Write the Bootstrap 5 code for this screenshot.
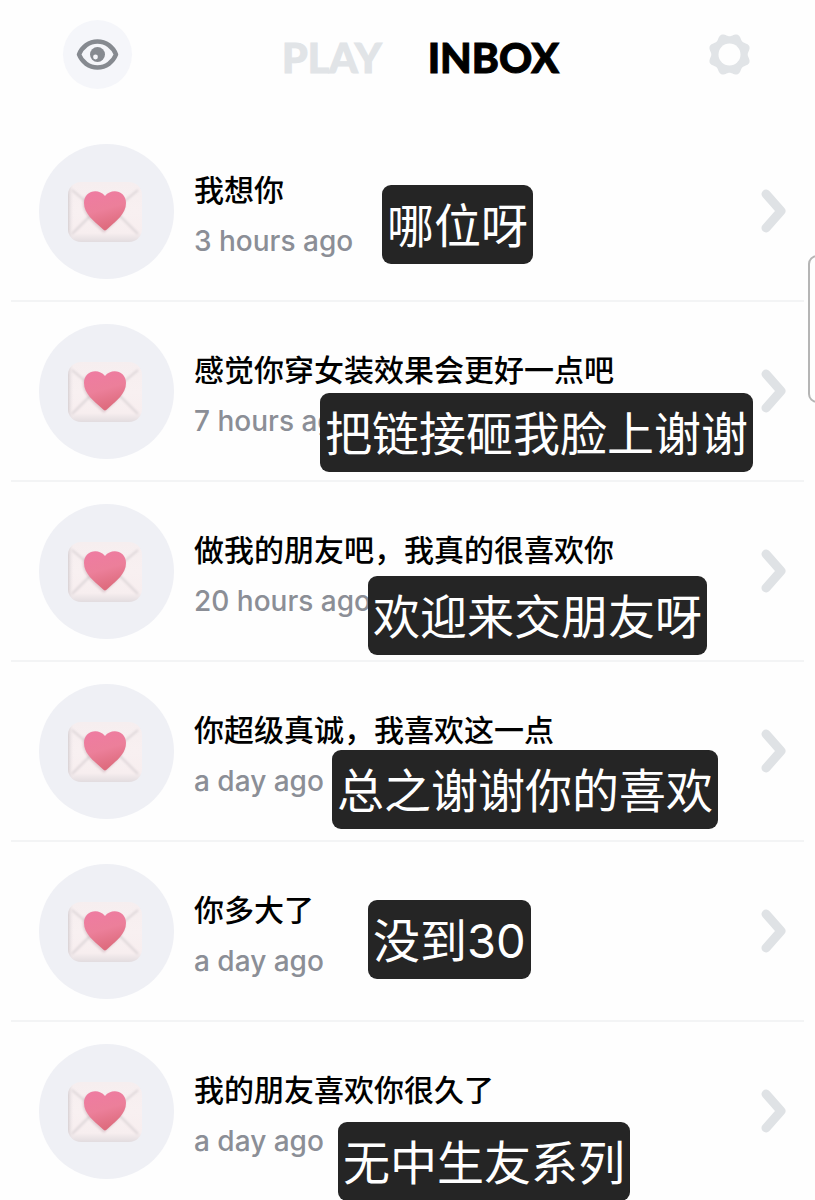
<!DOCTYPE html>
<html lang="zh-CN">
<head>
<meta charset="utf-8">
<meta name="viewport" content="width=device-width, initial-scale=1">
<title>Inbox</title>
<link href="https://cdn.jsdelivr.net/npm/bootstrap@5.3.0/dist/css/bootstrap.min.css" rel="stylesheet">
<style>
  body { background: #fefefe; color: #000; font-family: Inter, "Noto Sans CJK SC", sans-serif; overflow-x: hidden; }
  .topbar { height: 122px; padding: 20px 51px 32px 63px; }
  .icon-btn { width: 69px; height: 69px; border: 0; padding: 0; background: transparent; }
  .icon-btn.filled { background: #f5f6fa; }
  .tabs { gap: 46px; font: 900 41px/48px Lato, sans-serif; padding: 14px 0 0 14px; -webkit-text-stroke: 1px currentColor; }
  .tabs a { color: #e1e4e7; text-decoration: none; }
  .tabs a.active { color: #000; }
  .inbox { margin: 0 11px; }
  .message { height: 180px; gap: 20px; padding: 0 18px 0 28px; border-bottom: 2px solid #f3f4f5; color: #000; text-decoration: none; }
  .avatar { width: 135px; height: 135px; background: #eff0f5; }
  .message-text { padding-top: 8px; }
  .subject { font-family: "Noto Sans CJK SC", sans-serif; font-size: 30px; line-height: 52px; font-weight: 500; }
  .when { font-size: 28px; line-height: 54px; font-weight: 500; color: #8b8e96; }
  /* Reply captions stuck over the messages */
  .reply { position: absolute; z-index: 1; padding: 6px 5px 4px; border-radius: 9px; background: #252525; color: #fff; font-family: Inter, "Noto Sans CJK SC", sans-serif; font-size: 47px; line-height: 69px; white-space: nowrap; }
  .reply-1 { left: 371px; top: 63px; }
  .reply-2 { left: 309px; top: 91px; }
  .reply-3 { left: 357px; top: 94px; }
  .reply-4 { left: 321px; top: 88px; }
  .reply-5 { left: 357px; top: 58px; }
  .reply-6 { left: 327px; top: 100px; }
  .edge-handle { position: absolute; right: -12px; top: 255px; width: 19px; height: 148px; border: 2px solid #b5b5b5; border-radius: 9px; background: #fefefe; }
</style>
</head>
<body>
<svg class="position-absolute" width="0" height="0" aria-hidden="true">
  <defs>
    <linearGradient id="paper" x1="0" y1="0" x2="0" y2="1"><stop offset="0" stop-color="#f6eeef"/><stop offset=".5" stop-color="#f8f0f1"/><stop offset=".85" stop-color="#f7eeef"/><stop offset="1" stop-color="#e2dcdf"/></linearGradient>
    <linearGradient id="edge" x1="0" y1="0" x2="1" y2="0"><stop offset="0" stop-color="#cfc9cc" stop-opacity=".8"/><stop offset=".08" stop-color="#f4ecee" stop-opacity="0"/></linearGradient>
    <linearGradient id="love" x1="0" y1="0" x2=".3" y2="1"><stop offset="0" stop-color="#ef7ba2"/><stop offset=".55" stop-color="#ec7f9a"/><stop offset="1" stop-color="#de6c7e"/></linearGradient>
    <filter id="soft" x="-20%" y="-20%" width="140%" height="140%"><feGaussianBlur stdDeviation="1.2"/></filter>
  </defs>
  <symbol id="letter" viewBox="0 0 135 135">
    <rect x="29" y="38" width="74" height="60" rx="13" fill="url(#paper)"/>
    <rect x="29" y="38" width="74" height="60" rx="13" fill="url(#edge)"/>
    <path d="M33 46 57 66 33 90M99 46 75 66 99 90" fill="none" stroke="#ddd5d8" stroke-width="2" filter="url(#soft)"/>
    <path d="M66 88C58 80 45 71 45 59C45 47 60 44 66 53C73 44 87 47 87 59C87 71 74 80 66 88Z" transform="translate(-1 1)" fill="#c9aab4" opacity=".5" filter="url(#soft)"/>
    <path d="M66 86.500Q65 86.500 62 83.500C55 77 45 70 45 59C45 47 59 43.500 66 52C73 43.500 87 47 87 59C87 70 77 77 70 83.500Q67 86.500 66 86.500Z" fill="url(#love)"/>
  </symbol>
  <symbol id="chevron" viewBox="0 0 25 44"><path d="M5 5 20 22 5 39" fill="none" stroke="#dfe2e5" stroke-width="9" stroke-linecap="round" stroke-linejoin="round"/></symbol>
</svg>

<header class="topbar d-flex justify-content-between align-items-start">
  <button type="button" class="icon-btn filled rounded-circle" aria-label="Views">
    <svg width="69" height="69" viewBox="0 0 69 69"><path d="M16 34.500C19 27 26 21.500 34.500 21.500S50 27 53 34.500C50 42 43 47.500 34.500 47.500S19 42 16 34.500Z" fill="none" stroke="#868a90" stroke-width="4.500" stroke-linejoin="round"/><circle cx="34.500" cy="34.500" r="7.500" fill="#868a90"/><circle cx="32.500" cy="37" r="2.400" fill="#f5f6fa"/></svg>
  </button>
  <nav class="tabs d-flex" aria-label="Main">
    <a href="#play">PLAY</a>
    <a href="#inbox" class="active" aria-current="page">INBOX</a>
  </nav>
  <button type="button" class="icon-btn" aria-label="Settings">
    <svg width="69" height="69" viewBox="-34.500 -34.500 69 69"><g id="gear"></g></svg>
  </button>
</header>

<main class="inbox" id="inbox">
  <a href="#m1" class="message position-relative d-flex align-items-center">
    <svg class="avatar rounded-circle flex-shrink-0" aria-hidden="true"><use href="#letter"/></svg>
    <span class="message-text flex-grow-1"><span class="subject d-block">我想你</span><span class="when d-block">3 hours ago</span></span>
    <svg width="25" height="44" aria-hidden="true"><use href="#chevron"/></svg>
    <span class="reply reply-1">哪位呀</span>
  </a>
  <a href="#m2" class="message position-relative d-flex align-items-center">
    <svg class="avatar rounded-circle flex-shrink-0" aria-hidden="true"><use href="#letter"/></svg>
    <span class="message-text flex-grow-1"><span class="subject d-block">感觉你穿女装效果会更好一点吧</span><span class="when d-block">7 hours ago</span></span>
    <svg width="25" height="44" aria-hidden="true"><use href="#chevron"/></svg>
    <span class="reply reply-2">把链接砸我脸上谢谢</span>
  </a>
  <a href="#m3" class="message position-relative d-flex align-items-center">
    <svg class="avatar rounded-circle flex-shrink-0" aria-hidden="true"><use href="#letter"/></svg>
    <span class="message-text flex-grow-1"><span class="subject d-block">做我的朋友吧，我真的很喜欢你</span><span class="when d-block">20 hours ago</span></span>
    <svg width="25" height="44" aria-hidden="true"><use href="#chevron"/></svg>
    <span class="reply reply-3">欢迎来交朋友呀</span>
  </a>
  <a href="#m4" class="message position-relative d-flex align-items-center">
    <svg class="avatar rounded-circle flex-shrink-0" aria-hidden="true"><use href="#letter"/></svg>
    <span class="message-text flex-grow-1"><span class="subject d-block">你超级真诚，我喜欢这一点</span><span class="when d-block">a day ago</span></span>
    <svg width="25" height="44" aria-hidden="true"><use href="#chevron"/></svg>
    <span class="reply reply-4">总之谢谢你的喜欢</span>
  </a>
  <a href="#m5" class="message position-relative d-flex align-items-center">
    <svg class="avatar rounded-circle flex-shrink-0" aria-hidden="true"><use href="#letter"/></svg>
    <span class="message-text flex-grow-1"><span class="subject d-block">你多大了</span><span class="when d-block">a day ago</span></span>
    <svg width="25" height="44" aria-hidden="true"><use href="#chevron"/></svg>
    <span class="reply reply-5">没到30</span>
  </a>
  <a href="#m6" class="message position-relative d-flex align-items-center">
    <svg class="avatar rounded-circle flex-shrink-0" aria-hidden="true"><use href="#letter"/></svg>
    <span class="message-text flex-grow-1"><span class="subject d-block">我的朋友喜欢你很久了</span><span class="when d-block">a day ago</span></span>
    <svg width="25" height="44" aria-hidden="true"><use href="#chevron"/></svg>
    <span class="reply reply-6">无中生友系列</span>
  </a>
</main>
<div class="edge-handle" aria-hidden="true"></div>

<script src="https://cdn.jsdelivr.net/npm/bootstrap@5.3.0/dist/js/bootstrap.bundle.min.js"></script>
<script>
  // Eight-lobed gear: the outline radius swings in and out, with lobes off the axes
  let d = "";
  for (let i = 0; i < 160; i++) {
    const t = i / 160 * 2 * Math.PI;
    const r = 19.8 - 1.6 * Math.cos(8 * t);
    d += (i ? "L" : "M") + (r * Math.cos(t)).toFixed(2) + " " + (r * Math.sin(t)).toFixed(2);
  }
  document.getElementById("gear").innerHTML =
    `<path d="${d}Z" fill="#e1e4e7"/><circle r="11" fill="#fefefe"/>`;
</script>
</body>
</html>
